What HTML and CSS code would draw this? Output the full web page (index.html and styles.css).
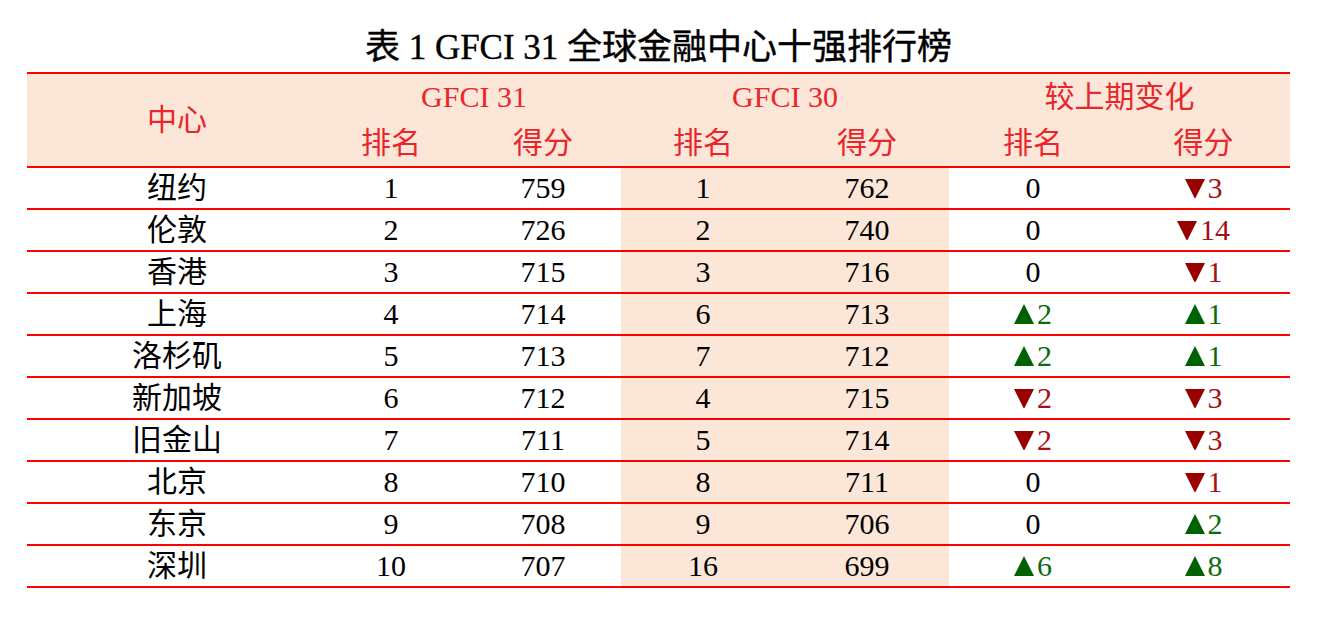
FILE: index.html
```html
<!DOCTYPE html>
<html lang="zh-CN">
<head>
<meta charset="utf-8">
<title>表1 GFCI 31 全球金融中心十强排行榜</title>
<link rel="stylesheet" href="styles.css">
</head>
<body>
<div class="page">
  <h1 class="title">表 1 GFCI 31 全球金融中心十强排行榜</h1>
  <table class="rank">
    <colgroup>
      <col class="c-city"><col class="c-r31"><col class="c-s31"><col class="c-r30"><col class="c-s30"><col class="c-dr"><col class="c-ds">
    </colgroup>
    <thead>
      <tr class="h1">
        <th rowspan="2" class="city-h">中心</th>
        <th colspan="2">GFCI 31</th>
        <th colspan="2">GFCI 30</th>
        <th colspan="2">较上期变化</th>
      </tr>
      <tr class="h2">
        <th>排名</th><th class="pad31">得分</th><th>排名</th><th>得分</th><th>排名</th><th>得分</th>
      </tr>
    </thead>
    <tbody>
      <tr><td class="city">纽约</td><td>1</td><td class="pad31">759</td><td class="sh">1</td><td class="sh">762</td><td>0</td><td><span class="chg down"><svg class="tri" viewBox="0 0 20 20"><polygon points="0,1 20,1 10,21"/></svg>3</span></td></tr>
      <tr><td class="city">伦敦</td><td>2</td><td class="pad31">726</td><td class="sh">2</td><td class="sh">740</td><td>0</td><td><span class="chg down"><svg class="tri" viewBox="0 0 20 20"><polygon points="0,1 20,1 10,21"/></svg>14</span></td></tr>
      <tr><td class="city">香港</td><td>3</td><td class="pad31">715</td><td class="sh">3</td><td class="sh">716</td><td>0</td><td><span class="chg down"><svg class="tri" viewBox="0 0 20 20"><polygon points="0,1 20,1 10,21"/></svg>1</span></td></tr>
      <tr><td class="city">上海</td><td>4</td><td class="pad31">714</td><td class="sh">6</td><td class="sh">713</td><td><span class="chg up"><svg class="tri" viewBox="0 0 20 20"><polygon points="10,0 20,20 0,20"/></svg>2</span></td><td><span class="chg up"><svg class="tri" viewBox="0 0 20 20"><polygon points="10,0 20,20 0,20"/></svg>1</span></td></tr>
      <tr><td class="city">洛杉矶</td><td>5</td><td class="pad31">713</td><td class="sh">7</td><td class="sh">712</td><td><span class="chg up"><svg class="tri" viewBox="0 0 20 20"><polygon points="10,0 20,20 0,20"/></svg>2</span></td><td><span class="chg up"><svg class="tri" viewBox="0 0 20 20"><polygon points="10,0 20,20 0,20"/></svg>1</span></td></tr>
      <tr><td class="city">新加坡</td><td>6</td><td class="pad31">712</td><td class="sh">4</td><td class="sh">715</td><td><span class="chg down"><svg class="tri" viewBox="0 0 20 20"><polygon points="0,1 20,1 10,21"/></svg>2</span></td><td><span class="chg down"><svg class="tri" viewBox="0 0 20 20"><polygon points="0,1 20,1 10,21"/></svg>3</span></td></tr>
      <tr><td class="city">旧金山</td><td>7</td><td class="pad31">711</td><td class="sh">5</td><td class="sh">714</td><td><span class="chg down"><svg class="tri" viewBox="0 0 20 20"><polygon points="0,1 20,1 10,21"/></svg>2</span></td><td><span class="chg down"><svg class="tri" viewBox="0 0 20 20"><polygon points="0,1 20,1 10,21"/></svg>3</span></td></tr>
      <tr><td class="city">北京</td><td>8</td><td class="pad31">710</td><td class="sh">8</td><td class="sh">711</td><td>0</td><td><span class="chg down"><svg class="tri" viewBox="0 0 20 20"><polygon points="0,1 20,1 10,21"/></svg>1</span></td></tr>
      <tr><td class="city">东京</td><td>9</td><td class="pad31">708</td><td class="sh">9</td><td class="sh">706</td><td>0</td><td><span class="chg up"><svg class="tri" viewBox="0 0 20 20"><polygon points="10,0 20,20 0,20"/></svg>2</span></td></tr>
      <tr><td class="city">深圳</td><td>10</td><td class="pad31">707</td><td class="sh">16</td><td class="sh">699</td><td><span class="chg up"><svg class="tri" viewBox="0 0 20 20"><polygon points="10,0 20,20 0,20"/></svg>6</span></td><td><span class="chg up"><svg class="tri" viewBox="0 0 20 20"><polygon points="10,0 20,20 0,20"/></svg>8</span></td></tr>
    </tbody>
  </table>
</div>
</body>
</html>
```
FILE: styles.css
```css
html, body {
  margin: 0;
  padding: 0;
  background: #ffffff;
}

.page {
  width: 1263px;
  padding: 28px 0 0 27px;
  font-family: "Liberation Serif", "Noto Sans CJK SC", serif;
  color: #000;
}

.title {
  margin: 0 0 4px 0;
  height: 40px;
  line-height: 40px;
  font-size: 35px;
  font-weight: normal;
  text-align: center;
  color: #000;
  -webkit-text-stroke: 0.4px #000;
}

.rank {
  width: 1263px;
  border-collapse: collapse;
  table-layout: fixed;
  font-size: 30px;
}

.c-city { width: 300px; }
.c-r31 { width: 128px; }
.c-s31 { width: 166px; }
.c-r30 { width: 164px; }
.c-s30 { width: 164px; }
.c-dr { width: 168px; }
.c-ds { width: 173px; }

.rank th {
  background: #fbe6d8;
  color: #e8262b;
  font-weight: normal;
  padding: 0;
  text-align: center;
  height: 46px;
  line-height: 46px;
}

.rank .h1 th {
  border-top: 2px solid #ff0000;
}

.rank .h2 th {
  border-bottom: 2px solid #ff0000;
}

.rank .city-h {
  border-bottom: 2px solid #ff0000;
}

.rank td {
  padding: 0;
  height: 40px;
  line-height: 40px;
  text-align: center;
  border-bottom: 2px solid #ff0000;
  white-space: nowrap;
}

.rank .pad31 {
  padding-left: 10px;
}

.rank td.sh {
  background: #fbe6d8;
}

.chg {
  display: inline-flex;
  align-items: center;
  gap: 3px;
  line-height: 40px;
}

.tri {
  width: 20px;
  height: 20px;
  display: block;
}

.down { color: #a50f15; }
.down .tri { fill: #990000; }
.up { color: #0c6b0c; }
.up .tri { fill: #006100; }
```
